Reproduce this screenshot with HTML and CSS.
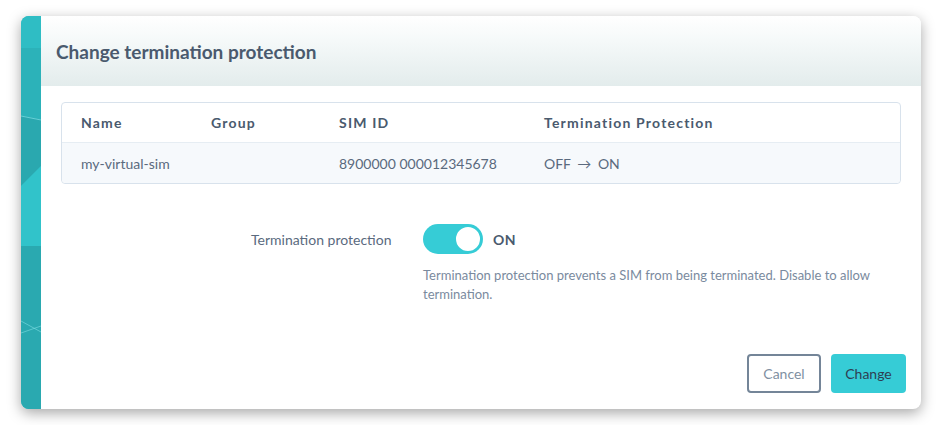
FILE: index.html
```html
<!DOCTYPE html>
<html lang="en">
<head>
    <meta charset="UTF-8">
    <title>Change termination protection</title>
    <link rel="stylesheet" href="styles.css">
</head>
<body>

    <div class="modal">
        <!-- Decorative teal strip on the left -->
        <div class="modal-strip">
            <svg width="20" height="393" viewBox="0 0 20 393" preserveAspectRatio="none">
                <rect width="20" height="393" fill="#2bb3ba"/>
                <polygon points="0,0 20,0 20,32 0,32" fill="#2fbdc4"/>
                <polygon points="0,32 20,32 20,104 0,100" fill="#2cb2b9"/>
                <polygon points="0,100 20,104 20,150 0,170" fill="#2aa8af"/>
                <polygon points="0,170 20,150 20,230 0,230" fill="#31c3ca"/>
                <polygon points="0,230 20,230 20,393 0,393" fill="#2aa9b0"/>
                <line x1="0" y1="100" x2="20" y2="104" stroke="#7fdde2" stroke-width="0.7"/>
                <line x1="0" y1="305" x2="20" y2="316" stroke="#7fdde2" stroke-width="0.6"/>
                <line x1="0" y1="317" x2="20" y2="310" stroke="#7fdde2" stroke-width="0.6"/>
            </svg>
        </div>

        <div class="modal-main">
            <div class="modal-header">
                <h1>Change termination protection</h1>
            </div>

            <div class="modal-body">
                <table class="sim-table">
                    <thead>
                        <tr>
                            <th class="col-name">Name</th>
                            <th class="col-group">Group</th>
                            <th class="col-sim">SIM ID</th>
                            <th>Termination Protection</th>
                        </tr>
                    </thead>
                    <tbody>
                        <tr>
                            <td>my-virtual-sim</td>
                            <td></td>
                            <td>8900000&nbsp;000012345678</td>
                            <td>OFF <span class="arrow">&rarr;</span> ON</td>
                        </tr>
                    </tbody>
                </table>

                <div class="field">
                    <label class="field-label">Termination protection</label>
                    <div class="field-control">
                        <div class="switch-row">
                            <span class="switch"><span class="knob"></span></span>
                            <span class="switch-text">ON</span>
                        </div>
                        <p class="help">Termination protection prevents a SIM from being terminated. Disable to allow termination.</p>
                    </div>
                </div>
            </div>

            <div class="modal-footer">
                <button class="btn btn-cancel">Cancel</button>
                <button class="btn btn-primary">Change</button>
            </div>
        </div>
    </div>

</body>
</html>
```

FILE: styles.css
```css
* {
    margin: 0;
    padding: 0;
    box-sizing: border-box;
}

body {
    font-family: 'Lato', 'Open Sans', sans-serif;
    background: #fff;
    color: #4a5a6e;
    padding: 16px 21px;
}

/* Modal card */
.modal {
    display: flex;
    width: 900px;
    height: 393px;
    background: #fff;
    border-radius: 8px;
    overflow: hidden;
    box-shadow: 0 4px 14px rgba(0, 0, 0, 0.35);
}

.modal-strip {
    width: 20px;
    flex-shrink: 0;
}

.modal-strip svg {
    display: block;
}

.modal-main {
    flex: 1;
    display: flex;
    flex-direction: column;
}

.modal-header {
    height: 70px;
    padding: 0 15px;
    display: flex;
    align-items: center;
    background: linear-gradient(180deg, #ffffff 0%, #f5f9f9 35%, #e3ecec 100%);
}

.modal-header h1 {
    font-size: 19px;
    font-weight: 700;
    color: #4a5a6e;
}

.modal-body {
    flex: 1;
    padding: 16px 20px 0 20px;
}

/* Table */
.sim-table {
    width: 100%;
    border-collapse: separate;
    border-spacing: 0;
    border: 1px solid #d8e2ec;
    border-radius: 4px;
    font-size: 14px;
}

.sim-table th {
    text-align: left;
    font-weight: 700;
    letter-spacing: 1.2px;
    color: #4a5a6e;
    height: 40px;
    padding: 0 0 0 19px;
    border-bottom: 1px solid #e6edf3;
}

.sim-table td {
    height: 40px;
    padding: 0 0 0 19px;
    color: #5a6a7e;
    background: #f6f9fc;
}

.sim-table tbody tr td:first-child {
    border-bottom-left-radius: 4px;
}

.sim-table tbody tr td:last-child {
    border-bottom-right-radius: 4px;
}

.col-name { width: 130px; }
.col-group { width: 128px; }
.col-sim { width: 205px; }

.arrow {
    margin: 0 3px;
}

/* Switch field */
.field {
    display: flex;
    margin-top: 40px;
    padding-left: 190px;
}

.field-label {
    width: 172px;
    font-size: 14px;
    color: #5a6a7e;
    padding-top: 7px;
}

.switch-row {
    display: flex;
    align-items: center;
}

.switch {
    position: relative;
    display: inline-block;
    width: 60px;
    height: 30px;
    border-radius: 15px;
    background: #36ccd6;
}

.knob {
    position: absolute;
    right: 1px;
    top: 1px;
    width: 28px;
    height: 28px;
    border-radius: 50%;
    background: #fff;
    border: 2px solid #36ccd6;
}

.switch-text {
    margin-left: 10px;
    font-size: 14px;
    font-weight: 700;
    letter-spacing: 0.5px;
    color: #4a5a6e;
}

.help {
    margin-top: 12px;
    width: 460px;
    font-size: 13px;
    line-height: 19px;
    color: #7a8a9e;
}

/* Footer buttons */
.modal-footer {
    display: flex;
    justify-content: flex-end;
    gap: 10px;
    padding: 0 15px 16px 0;
}

.btn {
    height: 39px;
    padding: 0 14px;
    font-family: inherit;
    font-size: 14px;
    border-radius: 4px;
    cursor: pointer;
}

.btn-cancel {
    width: 74px;
    background: #fff;
    color: #8090a2;
    border: 2px solid #748598;
}

.btn-primary {
    width: 75px;
    background: #36ccd6;
    color: #2e3e52;
    border: none;
}
```
